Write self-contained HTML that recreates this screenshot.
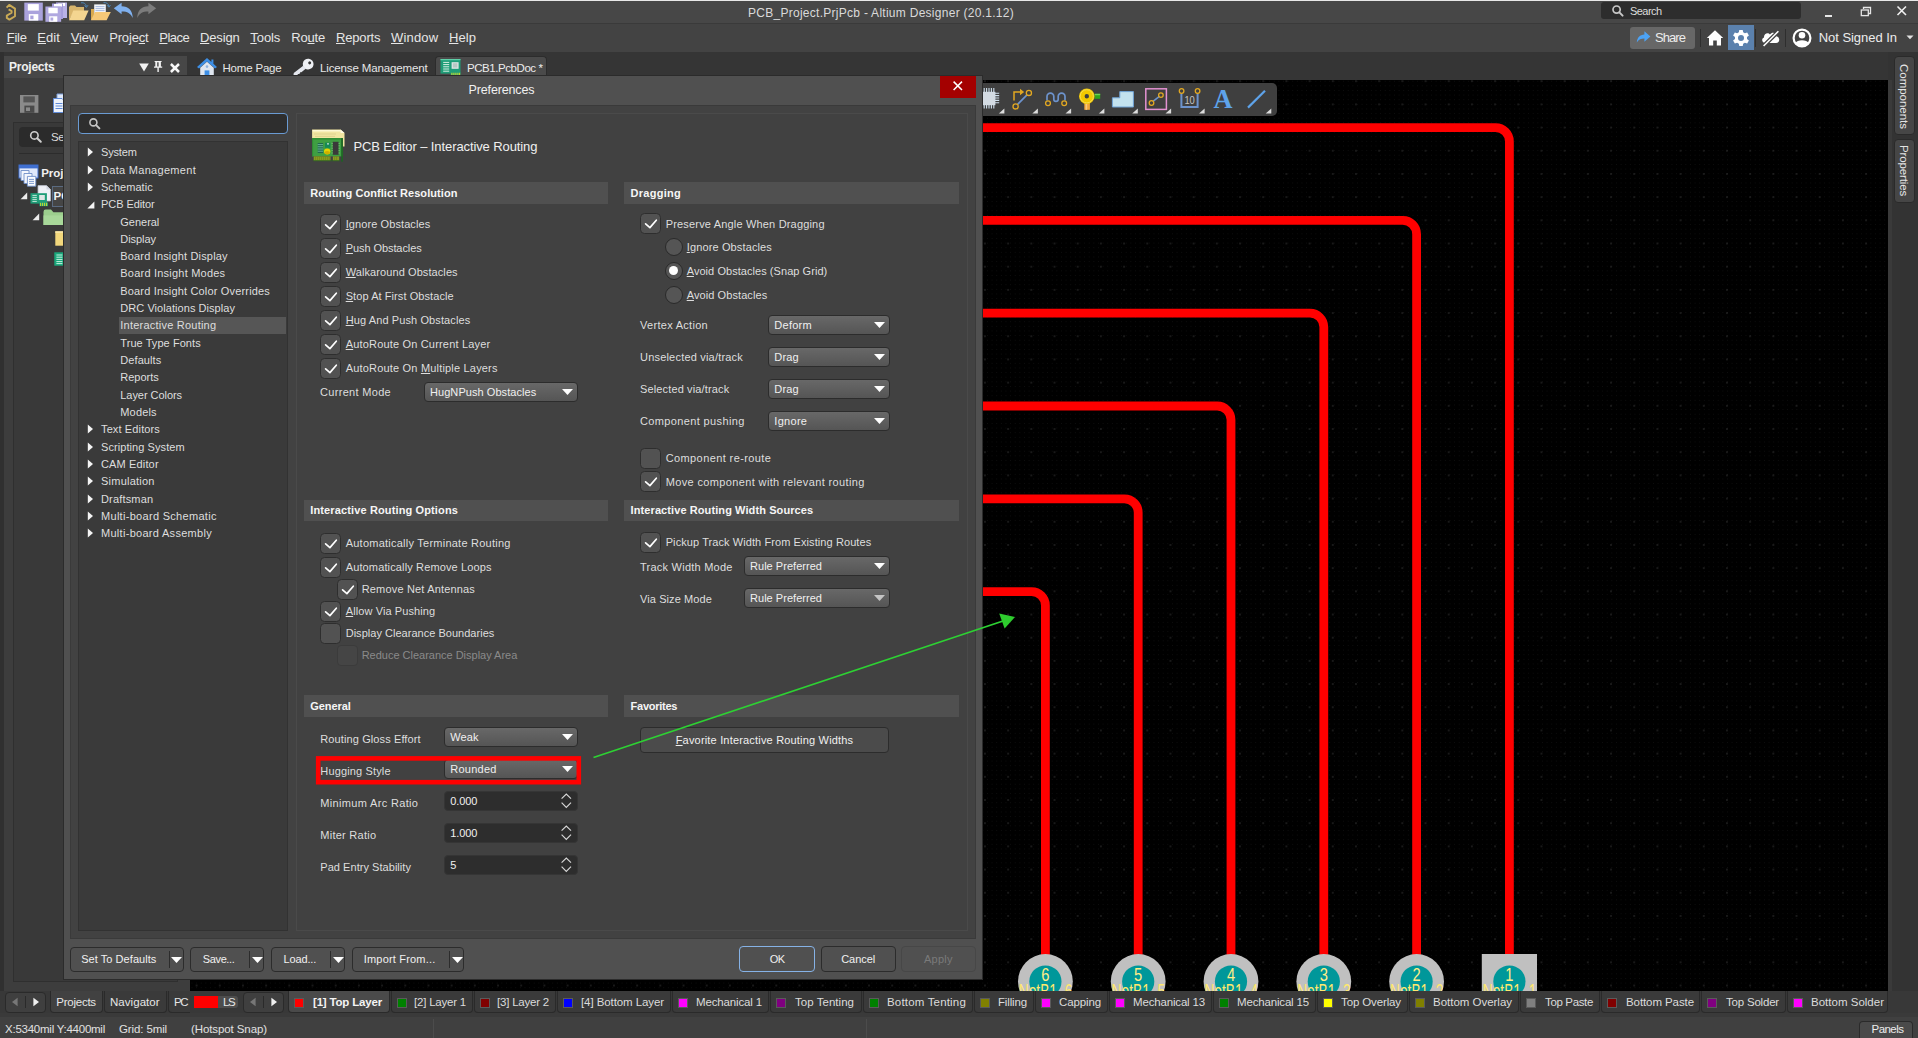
<!DOCTYPE html>
<html lang="en"><head><meta charset="utf-8"><title>Altium Designer - Preferences</title>
<style>
html,body{margin:0;padding:0}
body{width:1918px;height:1038px;overflow:hidden;background:#353535;position:relative;font-family:"Liberation Sans",sans-serif;font-size:11px;color:#dedede}
.a{position:absolute;display:block}
.t{white-space:nowrap;overflow:visible}
u{text-decoration:underline;text-underline-offset:1px;text-decoration-thickness:1px}
svg{overflow:visible}
</style></head>
<body>
<div class="a" style="left:0px;top:0px;width:1918px;height:1px;background:#e8e8e8;"></div>
<div class="a" style="left:0px;top:1px;width:1918px;height:22px;background:#474747;"></div>
<div class="a" style="left:0px;top:23px;width:1918px;height:1px;background:#3a3a3a;"></div>
<svg class="a" style="left:5px;top:3px;" width="12" height="18" viewBox="0 0 12 18"><path d="M1.6 4.6 L4.2 1.9 L10 5.6 L10 13.2 L4.4 16.6 L1.8 14.9 L1.8 12.6 L6.6 9.7 L6.6 8.1 L3.6 6.4" fill="none" stroke="#c9aa56" stroke-width="1.9" stroke-linejoin="round"/></svg>
<svg class="a" style="left:24px;top:2px;" width="20" height="20" viewBox="0 0 20 20"><g transform="translate(0.3,0.6) scale(1.0)"><rect x="0" y="0" width="18.5" height="18" fill="#aaa2dc"/><rect x="3.5" y="1.5" width="11" height="6.5" fill="#fff"/><rect x="4.5" y="11.5" width="9.5" height="6.5" fill="#fff"/><rect x="6" y="13" width="3.2" height="3.6" fill="#aaa2dc"/></g></svg>
<svg class="a" style="left:45px;top:2px;" width="23" height="20" viewBox="0 0 23 20"><rect x="11" y="0.5" width="11" height="15.5" fill="#b9b2e6"/><rect x="13" y="1" width="7" height="3" fill="#fff"/><rect x="7" y="1.5" width="11" height="15.5" fill="#a59ddb"/><rect x="9" y="2" width="8" height="2.6" fill="#fff"/><g transform="translate(0.4,4.5) scale(0.85)"><rect x="0" y="0" width="18.5" height="18" fill="#b0a8e0"/><rect x="3.5" y="1.5" width="11" height="6.5" fill="#fff"/><rect x="4.5" y="11.5" width="9.5" height="6.5" fill="#fff"/><rect x="6" y="13" width="3.2" height="3.6" fill="#b0a8e0"/></g></svg>
<svg class="a" style="left:68px;top:2px;" width="22" height="20" viewBox="0 0 22 20"><path d="M1 18 L1 5 L2.5 3.5 L7 3.5 L8.5 5 L16 5 L16 9 L6 9 Z" fill="#d9b56c"/><path d="M1 18.3 L5.3 8.6 L20.6 8.6 L16.2 18.3 Z" fill="#f4d590"/><path d="M13 0.8 q4.5 -0.6 5.4 3.6 m-1.8 -1 l1.8 2 l1.6 -2.2" fill="none" stroke="#4e86b8" stroke-width="1"/></svg>
<svg class="a" style="left:90px;top:2px;" width="22" height="20" viewBox="0 0 22 20"><path d="M1 18 L1 7 L4 7 L4 18 Z" fill="#d9a84e"/><rect x="4.2" y="2.4" width="11.6" height="11" fill="#f4f6fb"/><path d="M5.5 4.6h9M5.5 6.6h9M5.5 8.6h9" stroke="#9fb3dc" stroke-width="0.9"/><path d="M1 18.3 L5 10 L20.8 10 L16.6 18.3 Z" fill="#f6c878"/><path d="M13.5 0.6 q4.5 -0.4 5.4 3.6 m-1.8 -1 l1.8 2 l1.6 -2.2" fill="none" stroke="#4e86b8" stroke-width="1"/></svg>
<svg class="a" style="left:113px;top:2px;" width="22" height="18" viewBox="0 0 22 18"><path d="M0.8 6.2 L8.6 0.8 L8.6 4.2 C15.5 4.2 19.6 8.5 19.8 16 C17.6 11.2 14.2 9.3 8.6 9.4 L8.6 12.2 Z" fill="#7fb0ee"/></svg>
<svg class="a" style="left:135px;top:2px;" width="22" height="18" viewBox="0 0 22 18"><path d="M21.2 6.2 L13.4 0.8 L13.4 4.2 C6.5 4.2 2.4 8.5 2.2 16 C4.4 11.2 7.8 9.3 13.4 9.4 L13.4 12.2 Z" fill="#7c7c7c"/></svg>
<div class="a t" style="top:4.7px;line-height:16px;font-size:12px;color:#dadada;letter-spacing:0.273px;left:581px;width:600px;text-align:center;"><span id="t0">PCB_Project.PrjPcb - Altium Designer (20.1.12)</span></div>
<div class="a" style="left:1601px;top:2px;width:200px;height:17px;background:#2d2d2d;border-radius:3px;"></div>
<svg class="a" style="left:1611px;top:4px;" width="14" height="14" viewBox="0 0 14 14"><circle cx="5.6" cy="5.6" r="3.6" fill="none" stroke="#c8c8c8" stroke-width="1.7"/><path d="M8.4 8.4 L11.6 11.6" stroke="#c8c8c8" stroke-width="2" stroke-linecap="round"/></svg>
<div class="a t" style="top:2.5px;line-height:16px;font-size:11px;color:#dcdcdc;letter-spacing:-0.560px;left:1630px;"><span id="t1">Search</span></div>
<div class="a" style="left:1825px;top:15px;width:7px;height:1.6px;background:#e6e6e6;"></div>
<svg class="a" style="left:1860px;top:6px;" width="12" height="12" viewBox="0 0 12 12"><path d="M3.5 3 V1.5 H10.5 V7.5 H8.6" fill="none" stroke="#e6e6e6" stroke-width="1.3"/><rect x="1.3" y="4" width="7" height="5.6" fill="none" stroke="#e6e6e6" stroke-width="1.3"/></svg>
<svg class="a" style="left:1896px;top:5px;" width="12" height="12" viewBox="0 0 12 12"><path d="M1.5 1.5 L10 10 M10 1.5 L1.5 10" stroke="#f0f0f0" stroke-width="1.6"/></svg>
<div class="a" style="left:0px;top:24px;width:1918px;height:28px;background:#434343;"></div>
<div class="a t" style="top:28.6px;line-height:18px;font-size:13px;color:#e6e6e6;letter-spacing:-0.217px;left:6.7px;"><span id="t2"><u>F</u>ile</span></div>
<div class="a t" style="top:28.6px;line-height:18px;font-size:13px;color:#e6e6e6;letter-spacing:0.023px;left:37.3px;"><span id="t3"><u>E</u>dit</span></div>
<div class="a t" style="top:28.6px;line-height:18px;font-size:13px;color:#e6e6e6;letter-spacing:-0.163px;left:70.7px;"><span id="t4"><u>V</u>iew</span></div>
<div class="a t" style="top:28.6px;line-height:18px;font-size:13px;color:#e6e6e6;letter-spacing:-0.169px;left:109.2px;"><span id="t5">Proje<u>c</u>t</span></div>
<div class="a t" style="top:28.6px;line-height:18px;font-size:13px;color:#e6e6e6;letter-spacing:-0.506px;left:159.3px;"><span id="t6"><u>P</u>lace</span></div>
<div class="a t" style="top:28.6px;line-height:18px;font-size:13px;color:#e6e6e6;letter-spacing:-0.128px;left:200px;"><span id="t7"><u>D</u>esign</span></div>
<div class="a t" style="top:28.6px;line-height:18px;font-size:13px;color:#e6e6e6;letter-spacing:-0.072px;left:250.3px;"><span id="t8"><u>T</u>ools</span></div>
<div class="a t" style="top:28.6px;line-height:18px;font-size:13px;color:#e6e6e6;letter-spacing:-0.201px;left:291.3px;"><span id="t9">Ro<u>u</u>te</span></div>
<div class="a t" style="top:28.6px;line-height:18px;font-size:13px;color:#e6e6e6;letter-spacing:-0.176px;left:336px;"><span id="t10"><u>R</u>eports</span></div>
<div class="a t" style="top:28.6px;line-height:18px;font-size:13px;color:#e6e6e6;letter-spacing:0.175px;left:391px;"><span id="t11"><u>W</u>indow</span></div>
<div class="a t" style="top:28.6px;line-height:18px;font-size:13px;color:#e6e6e6;letter-spacing:0.062px;left:449px;"><span id="t12"><u>H</u>elp</span></div>
<div class="a" style="left:1630px;top:27px;width:65px;height:22px;background:#676767;border-radius:3px;"></div>
<svg class="a" style="left:1636px;top:30px;" width="16" height="16" viewBox="0 0 16 16"><path d="M14.4 6.4 L8.4 1.2 L8.4 4.4 C3.8 4.6 1.2 7.4 0.8 12.4 C2.8 9.6 5 8.6 8.4 8.6 L8.4 11.8 Z" fill="#4da3f5"/></svg>
<div class="a t" style="top:28.8px;line-height:18px;font-size:13px;color:#ececec;letter-spacing:-0.941px;left:1655px;"><span id="t13">Share</span></div>
<div class="a" style="left:1700px;top:29px;width:1px;height:18px;background:#2e2e2e;"></div>
<div class="a" style="left:1755px;top:29px;width:1px;height:18px;background:#2e2e2e;"></div>
<div class="a" style="left:1785px;top:29px;width:1px;height:18px;background:#2e2e2e;"></div>
<svg class="a" style="left:1706px;top:29px;" width="18" height="18" viewBox="0 0 18 18"><path d="M9 1.2 L0.8 9 H3 V16.6 H7.2 V11.4 H10.8 V16.6 H15 V9 H17.2 Z" fill="#fff"/></svg>
<div class="a" style="left:1728px;top:25px;width:26px;height:25px;background:#5b81ad;"></div>
<svg class="a" style="left:1732px;top:28.5px;" width="18" height="18" viewBox="0 0 18 18"><g transform="translate(9,9)"><path fill="#fff" fill-rule="evenodd" d="M-1.73 -8.12 L1.73 -8.12 L2.15 -5.71 L3.87 -4.72 L6.16 -5.56 L7.90 -2.56 L6.02 -0.99 L6.02 0.99 L7.90 2.56 L6.16 5.56 L3.87 4.72 L2.15 5.71 L1.73 8.12 L-1.73 8.12 L-2.15 5.71 L-3.87 4.72 L-6.16 5.56 L-7.90 2.56 L-6.02 0.99 L-6.02 -0.99 L-7.90 -2.56 L-6.16 -5.56 L-3.87 -4.72 L-2.15 -5.71 Z M3 0 A3 3 0 1 0 -3 0 A3 3 0 1 0 3 0 Z"/></g></svg>
<svg class="a" style="left:1761px;top:29px;" width="20" height="18" viewBox="0 0 20 18"><path d="M4.4 14 C0.8 14 0 9.6 3 8.4 C2.6 4.6 7 2.8 9 5.4 C11 2.6 15.6 3.6 15.6 7.4 C19 7.6 19.4 14 15 14 Z" fill="#fff"/><path d="M2.6 17 L17.4 2.3" stroke="#434343" stroke-width="4"/><path d="M2.6 17 L17.4 2.3" stroke="#fff" stroke-width="1.6"/></svg>
<svg class="a" style="left:1792.3px;top:27.5px;" width="20" height="20" viewBox="0 0 20 20"><circle cx="10" cy="10" r="8.4" fill="none" stroke="#fff" stroke-width="2.2"/><circle cx="10" cy="7.3" r="3.3" fill="#fff"/><path d="M3.4 15.2 C4.6 11.2 15.4 11.2 16.6 15.2 C14 19 6 19 3.4 15.2 Z" fill="#fff"/></svg>
<div class="a t" style="top:28.6px;line-height:18px;font-size:13px;color:#ececec;letter-spacing:-0.037px;left:1818.7px;"><span id="t14">Not Signed In</span></div>
<svg class="a" style="left:1906px;top:35px;" width="8" height="5" viewBox="0 0 8 5"><path d="M0.5 0.5 H7.5 L4 4.2 Z" fill="#e0e0e0"/></svg>
<div class="a" style="left:0px;top:52px;width:1918px;height:29px;background:#353535;"></div>
<div class="a" style="left:4px;top:56px;width:183px;height:22px;background:#474747;"></div>
<div class="a t" style="top:59.0px;line-height:16px;font-size:12px;font-weight:700;color:#f0f0f0;letter-spacing:-0.232px;left:9px;"><span id="t15">Projects</span></div>
<svg class="a" style="left:138.6px;top:62.6px;" width="10" height="9" viewBox="0 0 10 9"><path d="M0.2 0.4 H9.8 L5 8.6 Z" fill="#f2f2f2"/></svg>
<svg class="a" style="left:153.4px;top:60px;" width="10" height="13" viewBox="0 0 10 13"><path d="M1.6 0.9 H8.6 V2.1 H7.9 V6.4 H9.2 V7.8 H5.8 V12 H4.4 V7.8 H1 V6.4 H2.3 V2.1 H1.6 Z M4.2 2.2 H5.6 V6.4 H4.2 Z" fill="#f2f2f2" fill-rule="evenodd"/></svg>
<svg class="a" style="left:169.4px;top:61.5px;" width="12" height="12" viewBox="0 0 12 12"><path d="M1.9 2 L10 10 M10 2 L1.9 10" stroke="#f8f8f8" stroke-width="2.5"/></svg>
<svg class="a" style="left:196px;top:57px;" width="22" height="20" viewBox="0 0 22 20"><path d="M11 1 L1 10 L3 11.4 L11 4.4 L19 11.4 L21 10 L17.4 6.8 V2.6 H15.4 V5 Z" fill="#3d8fe6"/><path d="M4.2 10.8 L11 4.8 L17.8 10.8 V19.4 H4.2 Z" fill="#dfe6f0"/><rect x="8.6" y="13.4" width="4.8" height="6" fill="#3d8fe6"/><circle cx="11" cy="9.6" r="1.3" fill="#8fb4e0"/></svg>
<div class="a t" style="top:59.6px;line-height:16px;font-size:11.5px;color:#e6e6e6;letter-spacing:-0.193px;left:222.5px;"><span id="t16">Home Page</span></div>
<svg class="a" style="left:293px;top:58px;" width="22" height="20" viewBox="0 0 22 20"><g transform="rotate(-38 14 7)"><circle cx="15.5" cy="7" r="5.4" fill="#eef0f4"/><circle cx="17.4" cy="7" r="1.5" fill="#353535"/><path d="M10.6 5.2 H-1.4 L-3.2 7 L-1.4 9.2 H0.4 L1.2 8.4 L2 9.2 H3.6 L4.4 8.4 L5.2 9.2 H10.6 Z" fill="#e4e7ee"/></g></svg>
<div class="a t" style="top:59.6px;line-height:16px;font-size:11.5px;color:#e6e6e6;letter-spacing:-0.137px;left:320px;"><span id="t17">License Management</span></div>
<div class="a" style="left:435px;top:56px;width:112px;height:25px;background:#4a4a4a;border:1px solid #2c2c2c;border-radius:4px;border-bottom:none;box-sizing:border-box;border-bottom-left-radius:0;border-bottom-right-radius:0;"></div>
<svg class="a" style="left:440px;top:58px;" width="22" height="20" viewBox="0 0 22 20"><rect x="0.5" y="1" width="20" height="14.6" fill="#1f9d78"/><rect x="0.5" y="1" width="20" height="1.2" fill="#5fd0a8"/><path d="M3.2 4.4h6M3.2 6.6h6M3.2 8.8h6M3.2 11h6M3.2 13.2h6" stroke="#d8f0e4" stroke-width="1"/><rect x="11.6" y="4.2" width="7" height="6.6" fill="#dfe6e6"/><rect x="12.8" y="5.2" width="4.6" height="4.4" fill="#b8c8c4"/><rect x="10.6" y="14.2" width="9.8" height="4.4" fill="#1f9d78"/><path d="M11.9 14.8v3.6M13.9 14.8v3.6M15.9 14.8v3.6M17.9 14.8v3.6M19.6 14.8v3.6" stroke="#c8d830" stroke-width="1.1"/></svg>
<div class="a t" style="top:59.6px;line-height:16px;font-size:11.5px;color:#ececec;letter-spacing:-0.438px;left:467px;"><span id="t18">PCB1.PcbDoc *</span></div>
<div class="a" style="left:1888px;top:52px;width:30px;height:960px;background:#333333;"></div>
<div class="a" style="left:1888px;top:80px;width:4px;height:911px;background:#3a3a3a;"></div>
<div class="a" style="left:1894.2px;top:56.2px;width:20.4px;height:79.3px;background:#464646;border:1px solid #2a2a2a;border-radius:4px;box-sizing:border-box;"></div>
<div class="a" style="left:1894.2px;top:138.6px;width:20.4px;height:64.7px;background:#464646;border:1px solid #2a2a2a;border-radius:4px;box-sizing:border-box;"></div>
<div class="a t" style="left:1904.3px;top:63.7px;font-size:11.5px;color:#e4e4e4;transform-origin:0 0;transform:rotate(90deg) translateY(-50%);line-height:14px;letter-spacing:-0.022px;"><span id="t19">Components</span></div>
<div class="a t" style="left:1904.3px;top:145.2px;font-size:11.5px;color:#e4e4e4;transform-origin:0 0;transform:rotate(90deg) translateY(-50%);line-height:14px;letter-spacing:-0.142px;"><span id="t20">Properties</span></div>
<div class="a" style="left:0px;top:52px;width:4px;height:986px;background:#303030;"></div>
<div class="a" style="left:4px;top:78px;width:186px;height:913px;background:#3d3d3d;"></div>
<svg class="a" style="left:19.5px;top:94.5px;" width="19" height="18" viewBox="0 0 19 18"><rect x="0" y="0" width="18.4" height="17.8" fill="#8a8a8a"/><rect x="3.4" y="1.4" width="11.4" height="6" fill="#555"/><rect x="4.4" y="10.6" width="10" height="7.2" fill="#4a4a4a"/><rect x="6" y="12.4" width="4" height="3.6" fill="#8a8a8a"/></svg>
<svg class="a" style="left:52px;top:92px;" width="14" height="22" viewBox="0 0 14 22"><path d="M5 2 H12 V14 H5 Z" fill="#dfe8f8" stroke="#7f9fd8" stroke-width="1"/><path d="M1.5 6.5 H10 L12.5 9 V20.5 H1.5 Z" fill="#eef3fc" stroke="#5e8ad8" stroke-width="1"/><path d="M3.5 11.5h7M3.5 14h7M3.5 16.5h7" stroke="#5e8ad8" stroke-width="1.2"/></svg>
<div class="a" style="left:12.5px;top:122px;width:165.5px;height:860px;background:#393939;border:1px solid #2f2f2f;box-sizing:border-box;"></div>
<div class="a" style="left:19px;top:126.5px;width:160px;height:20.5px;background:#2b2b2b;border-radius:4px;"></div>
<svg class="a" style="left:29px;top:130px;" width="14" height="14" viewBox="0 0 14 14"><circle cx="5.4" cy="5.4" r="3.7" fill="none" stroke="#cfcfcf" stroke-width="1.6"/><path d="M8.2 8.2 L11.8 11.8" stroke="#cfcfcf" stroke-width="2" stroke-linecap="round"/></svg>
<div class="a t" style="top:129.0px;line-height:16px;font-size:11.5px;color:#dcdcdc;letter-spacing:-0.406px;left:51px;"><span id="t21">Search</span></div>
<div class="a" style="left:19px;top:153px;width:165px;height:1px;background:#2c2c2c;"></div>
<svg class="a" style="left:18px;top:163.5px;" width="22" height="23" viewBox="0 0 22 23"><rect x="1" y="1" width="19" height="13" fill="#dfe8fa" stroke="#3f6fd0" stroke-width="1"/><rect x="1" y="1" width="19" height="3.4" fill="#3f6fd0"/><path d="M3 6.5h8v10H3z" fill="#f4f7fd" stroke="#6f8fc8" stroke-width="0.9"/><path d="M6 9.5h8v10H6z" fill="#f4f7fd" stroke="#6f8fc8" stroke-width="0.9"/><path d="M9.4 12.4h8.4v9.8H9.4z" fill="#fafcff" stroke="#6f8fc8" stroke-width="0.9"/><path d="M11 15.4h5M11 17.4h5M11 19.4h5" stroke="#6f8fc8" stroke-width="0.9"/></svg>
<div class="a t" style="top:165.4px;line-height:16px;font-size:11.5px;font-weight:700;color:#f0f0f0;left:41.2px;"><span id="t22">Project Group</span></div>
<svg class="a" style="left:19.8px;top:191.5px;" width="8" height="8" viewBox="0 0 8 8"><path d="M7.2 0.6 V7.2 H0.6 Z" fill="#ececec"/></svg>
<svg class="a" style="left:30px;top:185px;" width="22" height="22" viewBox="0 0 22 22"><path d="M8 0.6 H16.5 L20.5 4.6 V16 H8 Z" fill="#eef0f6" stroke="#b8bcc8" stroke-width="0.8"/><path d="M16.5 0.6 V4.6 H20.5" fill="#cfd4e0"/><rect x="0.5" y="8.2" width="16.4" height="10.4" fill="#1f9d78"/><path d="M2.4 10.4h4.4M2.4 12.4h4.4M2.4 14.4h4.4M2.4 16.4h4.4" stroke="#d8f0e4" stroke-width="0.9"/><rect x="9.2" y="10" width="5.6" height="5" fill="#dfe6e6"/><rect x="9.4" y="17.4" width="8.6" height="3.8" fill="#1f9d78"/><path d="M10.6 17.8v3.2M12.6 17.8v3.2M14.6 17.8v3.2M16.6 17.8v3.2" stroke="#c8d830" stroke-width="1"/></svg>
<div class="a" style="left:51.5px;top:186px;width:140px;height:20.5px;background:#454545;border:1px solid #5a6a80;box-sizing:border-box;"></div>
<div class="a t" style="top:188.2px;line-height:16px;font-size:11.5px;font-weight:700;color:#f4f4f4;left:53.5px;"><span id="t23">PCB_Project.PrjPcb</span></div>
<svg class="a" style="left:32.2px;top:213px;" width="8" height="8" viewBox="0 0 8 8"><path d="M7.2 0.6 V7.2 H0.6 Z" fill="#ececec"/></svg>
<svg class="a" style="left:43px;top:209px;" width="24" height="17" viewBox="0 0 24 17"><path d="M0.5 16 V3 Q0.5 0.6 2.6 0.6 H8 L10.4 3.2 H21 Q23 3.2 23 5 V16 Z" fill="#9ccf8e"/><path d="M0.5 16 V6.4 H23 V16 Z" fill="#a8d89a"/></svg>
<svg class="a" style="left:54.5px;top:230.8px;" width="14" height="15" viewBox="0 0 14 15"><rect x="0.3" y="0.3" width="13" height="14.4" fill="#f2d77c"/><rect x="0.3" y="0.3" width="13" height="1.6" fill="#f8e6a8"/></svg>
<svg class="a" style="left:54px;top:252.4px;" width="14" height="14" viewBox="0 0 14 14"><rect x="0.3" y="0.3" width="13.4" height="13.4" fill="#1aa87c"/><path d="M2.4 3h6M2.4 5.2h6M2.4 7.4h6M2.4 9.6h6M2.4 11.6h6" stroke="#c8f0de" stroke-width="1"/></svg>
<div class="a" style="left:190px;top:78px;width:1698px;height:2px;background:#353535;"></div>
<div class="a" style="left:190px;top:80px;width:1698px;height:911px;background-color:#000;background-image:radial-gradient(circle,#343434 0.5px,transparent 0.85px),radial-gradient(circle,#0f0f0f 0.45px,transparent 0.7px);background-size:23.2px 23.2px,4.64px 4.64px;background-position:-5.0px -10.4px,-0.36px -1.12px;"></div>
<svg class="a" style="left:188px;top:81px;font-family:'Liberation Sans',sans-serif" width="1700" height="910.5" viewBox="188 81 1700 910.5"><path d="M900 127.6 H1495.6000000000001 A13.8 13.8 0 0 1 1509.4 141.4 V960 M900 220.4 H1402.8 A13.8 13.8 0 0 1 1416.6 234.20000000000002 V960 M900 313.2 H1310.0 A13.8 13.8 0 0 1 1323.8 327.0 V960 M900 406.0 H1217.2 A13.8 13.8 0 0 1 1231.0 419.8 V960 M900 498.8 H1124.4 A13.8 13.8 0 0 1 1138.2 512.6 V960 M900 591.6 H1031.6000000000001 A13.8 13.8 0 0 1 1045.4 605.4 V960 " fill="none" stroke="#ff0000" stroke-width="8.8"/><rect x="1481.8000000000002" y="954" width="55.2" height="60" fill="#c0c0c0"/><circle cx="1509.4" cy="981.5" r="16.1" fill="#00979a"/><text x="1509.4" y="980.8" font-size="19" fill="#ffee88" text-anchor="middle" textLength="8.2" lengthAdjust="spacingAndGlyphs">1</text><text x="1482.8000000000002" y="997.8" font-size="21" fill="#ffe86e" textLength="53.5" lengthAdjust="spacingAndGlyphs">NetB1_1</text><circle cx="1416.6" cy="981.5" r="27.4" fill="#c0c0c0"/><circle cx="1416.6" cy="981.5" r="16.1" fill="#00979a"/><text x="1416.6" y="980.8" font-size="19" fill="#ffee88" text-anchor="middle" textLength="8.2" lengthAdjust="spacingAndGlyphs">2</text><text x="1390.0" y="997.8" font-size="21" fill="#ffe86e" textLength="53.5" lengthAdjust="spacingAndGlyphs">NetB1_2</text><circle cx="1323.8" cy="981.5" r="27.4" fill="#c0c0c0"/><circle cx="1323.8" cy="981.5" r="16.1" fill="#00979a"/><text x="1323.8" y="980.8" font-size="19" fill="#ffee88" text-anchor="middle" textLength="8.2" lengthAdjust="spacingAndGlyphs">3</text><text x="1297.2" y="997.8" font-size="21" fill="#ffe86e" textLength="53.5" lengthAdjust="spacingAndGlyphs">NetB1_3</text><circle cx="1231.0" cy="981.5" r="27.4" fill="#c0c0c0"/><circle cx="1231.0" cy="981.5" r="16.1" fill="#00979a"/><text x="1231.0" y="980.8" font-size="19" fill="#ffee88" text-anchor="middle" textLength="8.2" lengthAdjust="spacingAndGlyphs">4</text><text x="1204.4" y="997.8" font-size="21" fill="#ffe86e" textLength="53.5" lengthAdjust="spacingAndGlyphs">NetB1_4</text><circle cx="1138.2" cy="981.5" r="27.4" fill="#c0c0c0"/><circle cx="1138.2" cy="981.5" r="16.1" fill="#00979a"/><text x="1138.2" y="980.8" font-size="19" fill="#ffee88" text-anchor="middle" textLength="8.2" lengthAdjust="spacingAndGlyphs">5</text><text x="1111.6000000000001" y="997.8" font-size="21" fill="#ffe86e" textLength="53.5" lengthAdjust="spacingAndGlyphs">NetB1_5</text><circle cx="1045.4" cy="981.5" r="27.4" fill="#c0c0c0"/><circle cx="1045.4" cy="981.5" r="16.1" fill="#00979a"/><text x="1045.4" y="980.8" font-size="19" fill="#ffee88" text-anchor="middle" textLength="8.2" lengthAdjust="spacingAndGlyphs">6</text><text x="1018.8000000000001" y="997.8" font-size="21" fill="#ffe86e" textLength="53.5" lengthAdjust="spacingAndGlyphs">NetB1_6</text></svg>
<div class="a" style="left:983px;top:82.5px;width:294px;height:33.5px;background:#3f3f3f;border-radius:0 5px 5px 0;"></div>
<svg class="a" style="left:983px;top:82px" width="296" height="35" viewBox="983 82 296 35"><rect x="983" y="91.8" width="12.4" height="13.4" fill="#d3dbe3"/><path d="M984.2 88v4M986.6 88v4M989 88v4M991.4 88v4M993.8 88v4M984.2 105v3.6M986.6 105v3.6M989 105v3.6M991.4 105v3.6M993.8 105v3.6" stroke="#cfe0ee" stroke-width="1.1"/><path d="M995 93.2h4.2M995 95.6h4.2M995 98h4.2M995 100.4h4.2M995 102.8h4.2" stroke="#cfe0ee" stroke-width="1.1"/><path d="M998.8 113.6 H1004.4 V108.4 Z" fill="#dcdcdc"/><path d="M1017.6 104.4 L1027 94.8" stroke="#6d93cc" stroke-width="1.7"/><circle cx="1015.6" cy="106.4" r="2.6" fill="none" stroke="#e2a822" stroke-width="1.3"/><circle cx="1028.9" cy="92.9" r="2.6" fill="none" stroke="#e2a822" stroke-width="1.3"/><path d="M1014 100.4 V92 H1020.4" fill="none" stroke="#e2a822" stroke-width="1.5"/><path d="M1020 88.8 L1024.2 92 L1020 95.2 Z" fill="#e2a822"/><path d="M1032.3 113.6 H1037.8999999999999 V108.4 Z" fill="#dcdcdc"/><path d="M1048 100.6 V96.6 a3.4 3.4 0 0 1 6.8 0 v2.6 a2.2 2.2 0 0 0 4.4 0 v-2.6 a3.4 3.4 0 0 1 6.8 0 V100.6" fill="none" stroke="#6d93cc" stroke-width="1.7" transform="translate(-1,0)"/><circle cx="1048" cy="103.2" r="2.4" fill="none" stroke="#e2a822" stroke-width="1.3"/><circle cx="1064.2" cy="103.2" r="2.4" fill="none" stroke="#e2a822" stroke-width="1.3"/><path d="M1065.5 113.6 H1071.1 V108.4 Z" fill="#dcdcdc"/><rect x="1094.6" y="93.8" width="5.6" height="5" fill="#2fa41c"/><rect x="1094.6" y="93.8" width="5.6" height="1.4" fill="#6fd058"/><rect x="1084.3" y="102.6" width="5.6" height="7.2" fill="#f2a63a"/><rect x="1085.6" y="102.6" width="1.6" height="7.2" fill="#f8c880"/><circle cx="1086.8" cy="96.3" r="5" fill="none" stroke="#f2c800" stroke-width="5.6"/><circle cx="1086.8" cy="96.3" r="6.6" fill="none" stroke="#f6dc50" stroke-width="1"/><path d="M1098.8 113.6 H1104.3999999999999 V108.4 Z" fill="#dcdcdc"/><path d="M1112.4 107 V97.8 H1119.8 V91.6 H1133.4 V107 Z" fill="#c3e2ee" stroke="#6fa3d6" stroke-width="1"/><path d="M1132.2 113.6 H1137.8 V108.4 Z" fill="#dcdcdc"/><rect x="1145.8" y="88.8" width="20.6" height="20.6" fill="none" stroke="#e392d2" stroke-width="1.5"/><path d="M1153 101.4 L1159.4 96.4" stroke="#6d93cc" stroke-width="1.6"/><circle cx="1151.5" cy="103" r="2.3" fill="none" stroke="#e2a822" stroke-width="1.3"/><circle cx="1160.9" cy="95.1" r="2.3" fill="none" stroke="#e2a822" stroke-width="1.3"/><path d="M1165.5 113.6 H1171.1 V108.4 Z" fill="#dcdcdc"/><path d="M1181.4 93.6 V107 H1197.6 V93.6" fill="none" stroke="#6d93cc" stroke-width="2"/><circle cx="1181.6" cy="91" r="2.3" fill="none" stroke="#e2a822" stroke-width="1.3"/><circle cx="1197.6" cy="91" r="2.3" fill="none" stroke="#e2a822" stroke-width="1.3"/><text x="1189.6" y="104.2" font-size="11.5" fill="#c4c4c4" text-anchor="middle" textLength="10.4" lengthAdjust="spacingAndGlyphs" font-family="'Liberation Sans',sans-serif">10</text><path d="M1199 113.6 H1204.6 V108.4 Z" fill="#dcdcdc"/><text x="1213.4" y="108.3" font-size="28" font-weight="700" fill="#5ea3ea" textLength="19" lengthAdjust="spacingAndGlyphs" font-family="'Liberation Serif',serif">A</text><path d="M1248 107.6 L1265 90.8" stroke="#5ea3ea" stroke-width="2.2"/><path d="M1265.7 113.6 H1271.3 V108.4 Z" fill="#dcdcdc"/></svg>
<div class="a" style="left:0px;top:991px;width:1918px;height:22px;background:#383838;"></div>
<div class="a" style="left:0px;top:1012.5px;width:1918px;height:4px;background:#3a3a3a;"></div>
<div class="a" style="left:0px;top:1016.5px;width:1918px;height:21.5px;background:#404040;"></div>
<div class="a" style="left:433px;top:1019px;width:1px;height:19px;background:#4c4c4c;"></div>
<div class="a" style="left:866px;top:1019px;width:1px;height:19px;background:#4c4c4c;"></div>
<div class="a" style="left:4.5px;top:991.5px;width:41.5px;height:21px;background:#3f3f3f;border:1px solid #2a2a2a;border-radius:4px;box-sizing:border-box;"></div>
<div class="a" style="left:25px;top:996px;width:1px;height:12px;background:#2a2a2a;"></div>
<svg class="a" style="left:11px;top:997px;" width="8" height="10" viewBox="0 0 8 10"><path d="M6.6 0.8 V9.2 L1 5 Z" fill="#777"/></svg>
<svg class="a" style="left:32px;top:997px;" width="8" height="10" viewBox="0 0 8 10"><path d="M1.4 0.8 V9.2 L7 5 Z" fill="#f0f0f0"/></svg>
<div class="a" style="left:49.5px;top:991px;width:53.5px;height:21.5px;background:#414141;border:1px solid #2a2a2a;box-sizing:border-box;border-top:none;border-radius:0 0 4px 4px;"></div>
<div class="a" style="left:103.5px;top:991px;width:63px;height:21.5px;background:#3a3a3a;border:1px solid #2a2a2a;box-sizing:border-box;border-top:none;border-radius:0 0 4px 4px;"></div>
<div class="a" style="left:167.5px;top:991px;width:22px;height:21.5px;background:#3a3a3a;border:1px solid #2a2a2a;box-sizing:border-box;border-top:none;border-radius:0 0 4px 4px;border-right:none;border-radius:0 0 0 4px;"></div>
<div class="a t" style="top:994.0px;line-height:16px;font-size:11.5px;color:#e6e6e6;letter-spacing:-0.231px;left:56.2px;"><span id="t24">Projects</span></div>
<div class="a t" style="top:994.0px;line-height:16px;font-size:11.5px;color:#e6e6e6;letter-spacing:0.053px;left:110px;"><span id="t25">Navigator</span></div>
<div class="a t" style="top:994.0px;line-height:16px;font-size:11.5px;color:#e6e6e6;letter-spacing:-1.492px;left:174px;"><span id="t26">PC</span></div>
<div class="a" style="left:190px;top:991px;width:52px;height:22px;background:#383838;"></div>
<div class="a" style="left:218px;top:995.5px;width:20px;height:12.5px;background:#4d4d4d;border-radius:0 3px 3px 0;"></div>
<div class="a" style="left:193.8px;top:995.5px;width:24.4px;height:12.5px;background:#ff0000;"></div>
<div class="a t" style="top:994.2px;line-height:16px;font-size:11.5px;color:#e6e6e6;letter-spacing:-1.289px;left:223px;"><span id="t27">LS</span></div>
<div class="a" style="left:242.5px;top:991.5px;width:41.5px;height:21px;background:#3f3f3f;border:1px solid #2a2a2a;border-radius:4px;box-sizing:border-box;"></div>
<div class="a" style="left:263px;top:996px;width:1px;height:12px;background:#2a2a2a;"></div>
<svg class="a" style="left:249px;top:997px;" width="8" height="10" viewBox="0 0 8 10"><path d="M6.6 0.8 V9.2 L1 5 Z" fill="#777"/></svg>
<svg class="a" style="left:270px;top:997px;" width="8" height="10" viewBox="0 0 8 10"><path d="M1.4 0.8 V9.2 L7 5 Z" fill="#f0f0f0"/></svg>
<div class="a" style="left:287.5px;top:991px;width:102.0px;height:21.5px;background:#4a4a4a;border:1px solid #2a2a2a;box-sizing:border-box;border-top:none;border-radius:0 0 4px 4px;"></div>
<div class="a" style="left:294px;top:997.5px;width:10px;height:10px;background:#ff0000;border:1px solid #5a5a5a;box-sizing:border-box;"></div>
<div class="a t" style="top:994.2px;line-height:16px;font-size:11.5px;font-weight:700;color:#f4f4f4;letter-spacing:-0.181px;left:313px;"><span id="t28">[1] Top Layer</span></div>
<div class="a" style="left:390.5px;top:991px;width:82.0px;height:21.5px;background:#3a3a3a;border:1px solid #2a2a2a;box-sizing:border-box;border-top:none;border-radius:0 0 4px 4px;"></div>
<div class="a" style="left:397px;top:997.5px;width:10px;height:10px;background:#008000;border:1px solid #5a5a5a;box-sizing:border-box;"></div>
<div class="a t" style="top:994.2px;line-height:16px;font-size:11.5px;color:#dcdcdc;letter-spacing:-0.213px;left:414px;"><span id="t29">[2] Layer 1</span></div>
<div class="a" style="left:473.5px;top:991px;width:82.0px;height:21.5px;background:#3a3a3a;border:1px solid #2a2a2a;box-sizing:border-box;border-top:none;border-radius:0 0 4px 4px;"></div>
<div class="a" style="left:480px;top:997.5px;width:10px;height:10px;background:#800000;border:1px solid #5a5a5a;box-sizing:border-box;"></div>
<div class="a t" style="top:994.2px;line-height:16px;font-size:11.5px;color:#dcdcdc;letter-spacing:-0.213px;left:497px;"><span id="t30">[3] Layer 2</span></div>
<div class="a" style="left:556.5px;top:991px;width:114.0px;height:21.5px;background:#3a3a3a;border:1px solid #2a2a2a;box-sizing:border-box;border-top:none;border-radius:0 0 4px 4px;"></div>
<div class="a" style="left:563px;top:997.5px;width:10px;height:10px;background:#0000ff;border:1px solid #5a5a5a;box-sizing:border-box;"></div>
<div class="a t" style="top:994.2px;line-height:16px;font-size:11.5px;color:#dcdcdc;letter-spacing:-0.086px;left:581px;"><span id="t31">[4] Bottom Layer</span></div>
<div class="a" style="left:671.5px;top:991px;width:97.0px;height:21.5px;background:#3a3a3a;border:1px solid #2a2a2a;box-sizing:border-box;border-top:none;border-radius:0 0 4px 4px;"></div>
<div class="a" style="left:678px;top:997.5px;width:10px;height:10px;background:#ff00ff;border:1px solid #5a5a5a;box-sizing:border-box;"></div>
<div class="a t" style="top:994.2px;line-height:16px;font-size:11.5px;color:#dcdcdc;letter-spacing:-0.147px;left:696px;"><span id="t32">Mechanical 1</span></div>
<div class="a" style="left:769.5px;top:991px;width:92.0px;height:21.5px;background:#3a3a3a;border:1px solid #2a2a2a;box-sizing:border-box;border-top:none;border-radius:0 0 4px 4px;"></div>
<div class="a" style="left:776px;top:997.5px;width:10px;height:10px;background:#800080;border:1px solid #5a5a5a;box-sizing:border-box;"></div>
<div class="a t" style="top:994.2px;line-height:16px;font-size:11.5px;color:#dcdcdc;letter-spacing:0.034px;left:795px;"><span id="t33">Top Tenting</span></div>
<div class="a" style="left:862.5px;top:991px;width:110.0px;height:21.5px;background:#3a3a3a;border:1px solid #2a2a2a;box-sizing:border-box;border-top:none;border-radius:0 0 4px 4px;"></div>
<div class="a" style="left:869px;top:997.5px;width:10px;height:10px;background:#008000;border:1px solid #5a5a5a;box-sizing:border-box;"></div>
<div class="a t" style="top:994.2px;line-height:16px;font-size:11.5px;color:#dcdcdc;letter-spacing:0.177px;left:887px;"><span id="t34">Bottom Tenting</span></div>
<div class="a" style="left:973.5px;top:991px;width:60.0px;height:21.5px;background:#3a3a3a;border:1px solid #2a2a2a;box-sizing:border-box;border-top:none;border-radius:0 0 4px 4px;"></div>
<div class="a" style="left:980px;top:997.5px;width:10px;height:10px;background:#808000;border:1px solid #5a5a5a;box-sizing:border-box;"></div>
<div class="a t" style="top:994.2px;line-height:16px;font-size:11.5px;color:#dcdcdc;letter-spacing:-0.150px;left:998px;"><span id="t35">Filling</span></div>
<div class="a" style="left:1034.5px;top:991px;width:73.0px;height:21.5px;background:#3a3a3a;border:1px solid #2a2a2a;box-sizing:border-box;border-top:none;border-radius:0 0 4px 4px;"></div>
<div class="a" style="left:1041px;top:997.5px;width:10px;height:10px;background:#ff00ff;border:1px solid #5a5a5a;box-sizing:border-box;"></div>
<div class="a t" style="top:994.2px;line-height:16px;font-size:11.5px;color:#dcdcdc;letter-spacing:-0.121px;left:1059px;"><span id="t36">Capping</span></div>
<div class="a" style="left:1108.5px;top:991px;width:103.0px;height:21.5px;background:#3a3a3a;border:1px solid #2a2a2a;box-sizing:border-box;border-top:none;border-radius:0 0 4px 4px;"></div>
<div class="a" style="left:1115px;top:997.5px;width:10px;height:10px;background:#ff00ff;border:1px solid #5a5a5a;box-sizing:border-box;"></div>
<div class="a t" style="top:994.2px;line-height:16px;font-size:11.5px;color:#dcdcdc;letter-spacing:-0.166px;left:1133px;"><span id="t37">Mechanical 13</span></div>
<div class="a" style="left:1212.5px;top:991px;width:103.0px;height:21.5px;background:#3a3a3a;border:1px solid #2a2a2a;box-sizing:border-box;border-top:none;border-radius:0 0 4px 4px;"></div>
<div class="a" style="left:1219px;top:997.5px;width:10px;height:10px;background:#008000;border:1px solid #5a5a5a;box-sizing:border-box;"></div>
<div class="a t" style="top:994.2px;line-height:16px;font-size:11.5px;color:#dcdcdc;letter-spacing:-0.166px;left:1237px;"><span id="t38">Mechanical 15</span></div>
<div class="a" style="left:1316.5px;top:991px;width:91.0px;height:21.5px;background:#3a3a3a;border:1px solid #2a2a2a;box-sizing:border-box;border-top:none;border-radius:0 0 4px 4px;"></div>
<div class="a" style="left:1323px;top:997.5px;width:10px;height:10px;background:#ffff00;border:1px solid #5a5a5a;box-sizing:border-box;"></div>
<div class="a t" style="top:994.2px;line-height:16px;font-size:11.5px;color:#dcdcdc;letter-spacing:-0.124px;left:1341px;"><span id="t39">Top Overlay</span></div>
<div class="a" style="left:1408.5px;top:991px;width:110.0px;height:21.5px;background:#3a3a3a;border:1px solid #2a2a2a;box-sizing:border-box;border-top:none;border-radius:0 0 4px 4px;"></div>
<div class="a" style="left:1415px;top:997.5px;width:10px;height:10px;background:#808000;border:1px solid #5a5a5a;box-sizing:border-box;"></div>
<div class="a t" style="top:994.2px;line-height:16px;font-size:11.5px;color:#dcdcdc;letter-spacing:-0.018px;left:1433px;"><span id="t40">Bottom Overlay</span></div>
<div class="a" style="left:1519.5px;top:991px;width:80.0px;height:21.5px;background:#3a3a3a;border:1px solid #2a2a2a;box-sizing:border-box;border-top:none;border-radius:0 0 4px 4px;"></div>
<div class="a" style="left:1526px;top:997.5px;width:10px;height:10px;background:#808080;border:1px solid #5a5a5a;box-sizing:border-box;"></div>
<div class="a t" style="top:994.2px;line-height:16px;font-size:11.5px;color:#dcdcdc;letter-spacing:-0.351px;left:1545px;"><span id="t41">Top Paste</span></div>
<div class="a" style="left:1600.5px;top:991px;width:99.0px;height:21.5px;background:#3a3a3a;border:1px solid #2a2a2a;box-sizing:border-box;border-top:none;border-radius:0 0 4px 4px;"></div>
<div class="a" style="left:1607px;top:997.5px;width:10px;height:10px;background:#800000;border:1px solid #5a5a5a;box-sizing:border-box;"></div>
<div class="a t" style="top:994.2px;line-height:16px;font-size:11.5px;color:#dcdcdc;letter-spacing:-0.087px;left:1626px;"><span id="t42">Bottom Paste</span></div>
<div class="a" style="left:1700.5px;top:991px;width:85.0px;height:21.5px;background:#3a3a3a;border:1px solid #2a2a2a;box-sizing:border-box;border-top:none;border-radius:0 0 4px 4px;"></div>
<div class="a" style="left:1707px;top:997.5px;width:10px;height:10px;background:#800080;border:1px solid #5a5a5a;box-sizing:border-box;"></div>
<div class="a t" style="top:994.2px;line-height:16px;font-size:11.5px;color:#dcdcdc;letter-spacing:-0.198px;left:1726px;"><span id="t43">Top Solder</span></div>
<div class="a" style="left:1786.5px;top:991px;width:101.5px;height:21.5px;background:#3a3a3a;border:1px solid #2a2a2a;box-sizing:border-box;border-top:none;border-radius:0 0 4px 4px;"></div>
<div class="a" style="left:1793px;top:997.5px;width:10px;height:10px;background:#ff00ff;border:1px solid #5a5a5a;box-sizing:border-box;"></div>
<div class="a t" style="top:994.2px;line-height:16px;font-size:11.5px;color:#dcdcdc;letter-spacing:0.010px;left:1811px;"><span id="t44">Bottom Solder</span></div>
<div class="a t" style="top:1021.0px;line-height:16px;font-size:11.5px;color:#e0e0e0;letter-spacing:-0.244px;left:5px;"><span id="t45">X:5340mil Y:4400mil</span></div>
<div class="a t" style="top:1021.0px;line-height:16px;font-size:11.5px;color:#e0e0e0;letter-spacing:-0.120px;left:119px;"><span id="t46">Grid: 5mil</span></div>
<div class="a t" style="top:1021.0px;line-height:16px;font-size:11.5px;color:#e0e0e0;letter-spacing:-0.097px;left:191px;"><span id="t47">(Hotspot Snap)</span></div>
<div class="a" style="left:1859px;top:1021px;width:53.5px;height:17px;background:#4a4a4a;border:1px solid #2a2a2a;border-radius:4px;box-sizing:border-box;border-bottom:none;border-radius:4px 4px 0 0;"></div>
<div class="a t" style="top:1021.4px;line-height:16px;font-size:11.5px;color:#ececec;letter-spacing:-0.529px;left:1587.5px;width:600px;text-align:center;"><span id="t48">Panels</span></div>
<div class="a" style="left:63px;top:75px;width:920px;height:904.5px;background:#505050;border:1px solid #2b2b2b;box-sizing:border-box;"></div>
<div class="a t" style="top:81.8px;line-height:16px;font-size:12.5px;color:#f0f0f0;letter-spacing:-0.146px;left:201.5px;width:600px;text-align:center;"><span id="t49">Preferences</span></div>
<div class="a" style="left:940px;top:76px;width:36px;height:21.5px;background:#a40000;"></div>
<svg class="a" style="left:951.5px;top:80px;" width="12" height="12" viewBox="0 0 12 12"><path d="M1.6 1.6 L10 10 M10 1.6 L1.6 10" stroke="#ffffff" stroke-width="1.5"/></svg>
<div class="a" style="left:70.4px;top:105px;width:905.6px;height:834px;background:#424242;border:1px solid #3a3a3a;box-sizing:border-box;"></div>
<div class="a" style="left:78px;top:113px;width:210px;height:21px;background:#2e2e2e;border:1px solid #6a9bd3;border-radius:4px;box-sizing:border-box;"></div>
<svg class="a" style="left:88px;top:117px;" width="14" height="14" viewBox="0 0 14 14"><circle cx="5.4" cy="5.4" r="3.5" fill="none" stroke="#c4c4c4" stroke-width="1.6"/><path d="M8.1 8.1 L11.4 11.4" stroke="#c4c4c4" stroke-width="2" stroke-linecap="round"/></svg>
<div class="a" style="left:78px;top:141px;width:210px;height:790px;background:#3a3a3a;border:1px solid #323232;box-sizing:border-box;"></div>
<div class="a" style="left:295.5px;top:113px;width:672px;height:818px;background:#414141;border:1px solid #4a4a4a;box-sizing:border-box;"></div>
<svg class="a" style="left:87px;top:147.2px;" width="7" height="10" viewBox="0 0 7 10"><path d="M0.8 0.4 L6 5 L0.8 9.6 Z" fill="#f4f4f4"/></svg>
<div class="a t" style="top:144.2px;line-height:16px;font-size:11px;letter-spacing:-0.165px;left:101px;"><span id="t50">System</span></div>
<svg class="a" style="left:87px;top:164.51999999999998px;" width="7" height="10" viewBox="0 0 7 10"><path d="M0.8 0.4 L6 5 L0.8 9.6 Z" fill="#f4f4f4"/></svg>
<div class="a t" style="top:161.5px;line-height:16px;font-size:11px;letter-spacing:0.300px;left:101px;"><span id="t51">Data Management</span></div>
<svg class="a" style="left:87px;top:181.83999999999997px;" width="7" height="10" viewBox="0 0 7 10"><path d="M0.8 0.4 L6 5 L0.8 9.6 Z" fill="#f4f4f4"/></svg>
<div class="a t" style="top:178.8px;line-height:16px;font-size:11px;letter-spacing:0.038px;left:101px;"><span id="t52">Schematic</span></div>
<svg class="a" style="left:86.5px;top:200.56px;" width="8" height="8" viewBox="0 0 8 8"><path d="M7.4 0.4 V7.4 H0.4 Z" fill="#f4f4f4"/></svg>
<div class="a t" style="top:196.2px;line-height:16px;font-size:11px;letter-spacing:-0.072px;left:101px;"><span id="t53">PCB Editor</span></div>
<div class="a t" style="top:213.5px;line-height:16px;font-size:11px;letter-spacing:-0.020px;left:120.3px;"><span id="t54">General</span></div>
<div class="a t" style="top:230.8px;line-height:16px;font-size:11px;letter-spacing:-0.054px;left:120.3px;"><span id="t55">Display</span></div>
<div class="a t" style="top:248.1px;line-height:16px;font-size:11px;letter-spacing:0.164px;left:120.3px;"><span id="t56">Board Insight Display</span></div>
<div class="a t" style="top:265.4px;line-height:16px;font-size:11px;letter-spacing:0.216px;left:120.3px;"><span id="t57">Board Insight Modes</span></div>
<div class="a t" style="top:282.8px;line-height:16px;font-size:11px;letter-spacing:0.165px;left:120.3px;"><span id="t58">Board Insight Color Overrides</span></div>
<div class="a t" style="top:300.1px;line-height:16px;font-size:11px;letter-spacing:0.054px;left:120.3px;"><span id="t59">DRC Violations Display</span></div>
<div class="a" style="left:119px;top:316.79999999999995px;width:167px;height:17px;background:#565656;"></div>
<div class="a t" style="top:317.4px;line-height:16px;font-size:11px;letter-spacing:0.225px;left:120.3px;"><span id="t60">Interactive Routing</span></div>
<div class="a t" style="top:334.7px;line-height:16px;font-size:11px;letter-spacing:0.061px;left:120.3px;"><span id="t61">True Type Fonts</span></div>
<div class="a t" style="top:352.0px;line-height:16px;font-size:11px;letter-spacing:0.080px;left:120.3px;"><span id="t62">Defaults</span></div>
<div class="a t" style="top:369.4px;line-height:16px;font-size:11px;letter-spacing:-0.019px;left:120.3px;"><span id="t63">Reports</span></div>
<div class="a t" style="top:386.7px;line-height:16px;font-size:11px;letter-spacing:-0.055px;left:120.3px;"><span id="t64">Layer Colors</span></div>
<div class="a t" style="top:404.0px;line-height:16px;font-size:11px;letter-spacing:0.155px;left:120.3px;"><span id="t65">Models</span></div>
<svg class="a" style="left:87px;top:424.32px;" width="7" height="10" viewBox="0 0 7 10"><path d="M0.8 0.4 L6 5 L0.8 9.6 Z" fill="#f4f4f4"/></svg>
<div class="a t" style="top:421.3px;line-height:16px;font-size:11px;letter-spacing:0.128px;left:101px;"><span id="t66">Text Editors</span></div>
<svg class="a" style="left:87px;top:441.64px;" width="7" height="10" viewBox="0 0 7 10"><path d="M0.8 0.4 L6 5 L0.8 9.6 Z" fill="#f4f4f4"/></svg>
<div class="a t" style="top:438.6px;line-height:16px;font-size:11px;letter-spacing:0.073px;left:101px;"><span id="t67">Scripting System</span></div>
<svg class="a" style="left:87px;top:458.96px;" width="7" height="10" viewBox="0 0 7 10"><path d="M0.8 0.4 L6 5 L0.8 9.6 Z" fill="#f4f4f4"/></svg>
<div class="a t" style="top:456.0px;line-height:16px;font-size:11px;letter-spacing:0.145px;left:101px;"><span id="t68">CAM Editor</span></div>
<svg class="a" style="left:87px;top:476.28px;" width="7" height="10" viewBox="0 0 7 10"><path d="M0.8 0.4 L6 5 L0.8 9.6 Z" fill="#f4f4f4"/></svg>
<div class="a t" style="top:473.3px;line-height:16px;font-size:11px;letter-spacing:0.234px;left:101px;"><span id="t69">Simulation</span></div>
<svg class="a" style="left:87px;top:493.59999999999997px;" width="7" height="10" viewBox="0 0 7 10"><path d="M0.8 0.4 L6 5 L0.8 9.6 Z" fill="#f4f4f4"/></svg>
<div class="a t" style="top:490.6px;line-height:16px;font-size:11px;letter-spacing:0.172px;left:101px;"><span id="t70">Draftsman</span></div>
<svg class="a" style="left:87px;top:510.9200000000001px;" width="7" height="10" viewBox="0 0 7 10"><path d="M0.8 0.4 L6 5 L0.8 9.6 Z" fill="#f4f4f4"/></svg>
<div class="a t" style="top:507.9px;line-height:16px;font-size:11px;letter-spacing:0.298px;left:101px;"><span id="t71">Multi-board Schematic</span></div>
<svg class="a" style="left:87px;top:528.24px;" width="7" height="10" viewBox="0 0 7 10"><path d="M0.8 0.4 L6 5 L0.8 9.6 Z" fill="#f4f4f4"/></svg>
<div class="a t" style="top:525.2px;line-height:16px;font-size:11px;letter-spacing:0.292px;left:101px;"><span id="t72">Multi-board Assembly</span></div>
<svg class="a" style="left:311px;top:129px" width="35" height="34" viewBox="311 129 35 34"><path d="M312.1 129.4 H340.6 L344.5 133 V146.5 H337.5 V138.6 H312.1 Z" fill="#f1e6a2"/><path d="M312.6 130 H340.2 L341.6 131.6 H312.6 Z" fill="#fdf8d4"/><path d="M340.6 129.4 L344.5 133 H340.6 Z" fill="#fffbe4"/><path d="M314 134h22M315 136.4h20" stroke="#ddd08c" stroke-width="0.9"/><rect x="312.1" y="138.2" width="30.8" height="18.2" fill="#3f9f42"/><rect x="312.1" y="138.2" width="30.8" height="1.3" fill="#2a8a30"/><rect x="341.2" y="138.2" width="1.7" height="23.5" fill="#1d6424"/><rect x="312.1" y="139.5" width="1" height="16.9" fill="#2f8a34"/><rect x="317.7" y="143" width="5.4" height="10" fill="#1f6a4c"/><path d="M317.7 144.6h5.4M317.7 146.8h5.4M317.7 149h5.4M317.7 151.2h5.4" stroke="#7cc8a4" stroke-width="0.8"/><rect x="325" y="142.6" width="5.4" height="5.2" fill="#148a56"/><circle cx="328" cy="143.8" r="0.9" fill="#d8e8e0"/><rect x="332.7" y="141.8" width="5.9" height="13" fill="#3a3a3a"/><path d="M331.6 143.4h1.1M331.6 145.8h1.1M331.6 148.2h1.1M331.6 150.6h1.1M331.6 153h1.1M338.6 143.4h1.1M338.6 145.8h1.1M338.6 148.2h1.1M338.6 150.6h1.1M338.6 153h1.1" stroke="#8fd08c" stroke-width="0.8"/><ellipse cx="327.2" cy="151.5" rx="3.2" ry="2.9" fill="#e6d400"/><ellipse cx="327.2" cy="152.6" rx="2.8" ry="1.6" fill="#cfae00"/><rect x="313.7" y="156.4" width="16.8" height="4.2" fill="#8a9c22"/><rect x="332.9" y="156.4" width="6.3" height="4.2" fill="#8a9c22"/><path d="M315.4 156.6v3.8M317.4 156.6v3.8M319.4 156.6v3.8M321.4 156.6v3.8M323.4 156.6v3.8M325.4 156.6v3.8M327.4 156.6v3.8M329.2 156.6v3.8M334.6 156.6v3.8M336.6 156.6v3.8" stroke="#6e8418" stroke-width="0.7"/><rect x="313.2" y="160.4" width="26.6" height="0.8" fill="#2c6a20"/></svg>
<div class="a t" style="top:138.0px;line-height:18px;font-size:13px;color:#f0f0f0;letter-spacing:-0.099px;left:353.4px;"><span id="t73">PCB Editor – Interactive Routing</span></div>
<div class="a" style="left:304px;top:182px;width:304px;height:21.5px;background:#505050;"></div>
<div class="a t" style="top:184.6px;line-height:16px;font-size:11px;font-weight:700;color:#f6f6f6;letter-spacing:0.065px;left:310.3px;"><span id="t74">Routing Conflict Resolution</span></div>
<div class="a" style="left:320.4px;top:213.5px;width:21px;height:21px;background:#525252;border:1px solid #2e2e2e;border-radius:4.5px;box-sizing:border-box;"></div>
<svg class="a" style="left:320.4px;top:213.5px;" width="21" height="21" viewBox="0 0 21 21"><path d="M5.6 10.8 L9.9 14.6 L16.3 7.2" fill="none" stroke="#ffffff" stroke-width="1.7" stroke-linecap="round" stroke-linejoin="round"/></svg>
<div class="a t" style="top:216.1px;line-height:16px;font-size:11px;letter-spacing:0.089px;left:345.7px;"><span id="t75"><u>I</u>gnore Obstacles</span></div>
<div class="a" style="left:320.4px;top:237.5px;width:21px;height:21px;background:#525252;border:1px solid #2e2e2e;border-radius:4.5px;box-sizing:border-box;"></div>
<svg class="a" style="left:320.4px;top:237.5px;" width="21" height="21" viewBox="0 0 21 21"><path d="M5.6 10.8 L9.9 14.6 L16.3 7.2" fill="none" stroke="#ffffff" stroke-width="1.7" stroke-linecap="round" stroke-linejoin="round"/></svg>
<div class="a t" style="top:240.1px;line-height:16px;font-size:11px;letter-spacing:-0.075px;left:345.7px;"><span id="t76"><u>P</u>ush Obstacles</span></div>
<div class="a" style="left:320.4px;top:261.5px;width:21px;height:21px;background:#525252;border:1px solid #2e2e2e;border-radius:4.5px;box-sizing:border-box;"></div>
<svg class="a" style="left:320.4px;top:261.5px;" width="21" height="21" viewBox="0 0 21 21"><path d="M5.6 10.8 L9.9 14.6 L16.3 7.2" fill="none" stroke="#ffffff" stroke-width="1.7" stroke-linecap="round" stroke-linejoin="round"/></svg>
<div class="a t" style="top:264.1px;line-height:16px;font-size:11px;letter-spacing:0.087px;left:345.7px;"><span id="t77"><u>W</u>alkaround Obstacles</span></div>
<div class="a" style="left:320.4px;top:285.5px;width:21px;height:21px;background:#525252;border:1px solid #2e2e2e;border-radius:4.5px;box-sizing:border-box;"></div>
<svg class="a" style="left:320.4px;top:285.5px;" width="21" height="21" viewBox="0 0 21 21"><path d="M5.6 10.8 L9.9 14.6 L16.3 7.2" fill="none" stroke="#ffffff" stroke-width="1.7" stroke-linecap="round" stroke-linejoin="round"/></svg>
<div class="a t" style="top:288.1px;line-height:16px;font-size:11px;letter-spacing:0.073px;left:345.7px;"><span id="t78"><u>S</u>top At First Obstacle</span></div>
<div class="a" style="left:320.4px;top:309.5px;width:21px;height:21px;background:#525252;border:1px solid #2e2e2e;border-radius:4.5px;box-sizing:border-box;"></div>
<svg class="a" style="left:320.4px;top:309.5px;" width="21" height="21" viewBox="0 0 21 21"><path d="M5.6 10.8 L9.9 14.6 L16.3 7.2" fill="none" stroke="#ffffff" stroke-width="1.7" stroke-linecap="round" stroke-linejoin="round"/></svg>
<div class="a t" style="top:312.1px;line-height:16px;font-size:11px;letter-spacing:0.104px;left:345.7px;"><span id="t79"><u>H</u>ug And Push Obstacles</span></div>
<div class="a" style="left:320.4px;top:333.5px;width:21px;height:21px;background:#525252;border:1px solid #2e2e2e;border-radius:4.5px;box-sizing:border-box;"></div>
<svg class="a" style="left:320.4px;top:333.5px;" width="21" height="21" viewBox="0 0 21 21"><path d="M5.6 10.8 L9.9 14.6 L16.3 7.2" fill="none" stroke="#ffffff" stroke-width="1.7" stroke-linecap="round" stroke-linejoin="round"/></svg>
<div class="a t" style="top:336.1px;line-height:16px;font-size:11px;letter-spacing:0.176px;left:345.7px;"><span id="t80"><u>A</u>utoRoute On Current Layer</span></div>
<div class="a" style="left:320.4px;top:357.5px;width:21px;height:21px;background:#525252;border:1px solid #2e2e2e;border-radius:4.5px;box-sizing:border-box;"></div>
<svg class="a" style="left:320.4px;top:357.5px;" width="21" height="21" viewBox="0 0 21 21"><path d="M5.6 10.8 L9.9 14.6 L16.3 7.2" fill="none" stroke="#ffffff" stroke-width="1.7" stroke-linecap="round" stroke-linejoin="round"/></svg>
<div class="a t" style="top:360.1px;line-height:16px;font-size:11px;letter-spacing:0.186px;left:345.7px;"><span id="t81">AutoRoute On <u>M</u>ultiple Layers</span></div>
<div class="a t" style="top:384.3px;line-height:16px;font-size:11px;letter-spacing:0.311px;left:320px;"><span id="t82">Current Mode</span></div>
<div class="a" style="left:424px;top:381.7px;width:153.6px;height:20.3px;border:1px solid #2c2c2c;border-radius:4px;box-sizing:border-box;background:linear-gradient(#686868,#555555);"></div>
<svg class="a" style="left:562.0px;top:388.7px;" width="11" height="6" viewBox="0 0 11 6"><path d="M0 0 H11 L5.5 6 Z" fill="#ffffff"/></svg>
<div class="a t" style="top:383.7px;line-height:16px;font-size:11px;color:#f0f0f0;letter-spacing:0.063px;left:430px;"><span id="t83">HugNPush Obstacles</span></div>
<div class="a" style="left:624.3px;top:182px;width:335px;height:21.5px;background:#505050;"></div>
<div class="a t" style="top:184.6px;line-height:16px;font-size:11px;font-weight:700;color:#f6f6f6;letter-spacing:0.252px;left:630.5999999999999px;"><span id="t84">Dragging</span></div>
<div class="a" style="left:640.4px;top:213.4px;width:21px;height:21px;background:#525252;border:1px solid #2e2e2e;border-radius:4.5px;box-sizing:border-box;"></div>
<svg class="a" style="left:640.4px;top:213.4px;" width="21" height="21" viewBox="0 0 21 21"><path d="M5.6 10.8 L9.9 14.6 L16.3 7.2" fill="none" stroke="#ffffff" stroke-width="1.7" stroke-linecap="round" stroke-linejoin="round"/></svg>
<div class="a t" style="top:216.2px;line-height:16px;font-size:11px;letter-spacing:0.175px;left:665.7px;"><span id="t85">Preserve Angle When Dragging</span></div>
<div class="a" style="left:664.85px;top:237.99999999999997px;width:17.8px;height:17.8px;background:#555555;border:1.2px solid #2a2a2a;border-radius:9px;box-sizing:border-box;"></div>
<div class="a t" style="top:238.8px;line-height:16px;font-size:11px;letter-spacing:0.133px;left:686.7px;"><span id="t86"><u>I</u>gnore Obstacles</span></div>
<div class="a" style="left:664.85px;top:262.0px;width:17.8px;height:17.8px;background:#555555;border:1.2px solid #2a2a2a;border-radius:9px;box-sizing:border-box;"></div>
<div class="a" style="left:669.25px;top:266.4px;width:9px;height:9px;background:#ffffff;border-radius:4.5px;"></div>
<div class="a t" style="top:262.8px;line-height:16px;font-size:11px;letter-spacing:0.052px;left:686.7px;"><span id="t87"><u>A</u>void Obstacles (Snap Grid)</span></div>
<div class="a" style="left:664.85px;top:286.0px;width:17.8px;height:17.8px;background:#555555;border:1.2px solid #2a2a2a;border-radius:9px;box-sizing:border-box;"></div>
<div class="a t" style="top:286.8px;line-height:16px;font-size:11px;letter-spacing:0.087px;left:686.7px;"><span id="t88"><u>A</u>void Obstacles</span></div>
<div class="a t" style="top:317.4px;line-height:16px;font-size:11px;letter-spacing:0.291px;left:640px;"><span id="t89">Vertex Action</span></div>
<div class="a" style="left:768.3px;top:315px;width:121.3px;height:20.3px;border:1px solid #2c2c2c;border-radius:4px;box-sizing:border-box;background:linear-gradient(#686868,#555555);"></div>
<svg class="a" style="left:873.9999999999999px;top:322px;" width="11" height="6" viewBox="0 0 11 6"><path d="M0 0 H11 L5.5 6 Z" fill="#ffffff"/></svg>
<div class="a t" style="top:317.0px;line-height:16px;font-size:11px;color:#f0f0f0;letter-spacing:0.273px;left:774.3px;"><span id="t90">Deform</span></div>
<div class="a t" style="top:349.4px;line-height:16px;font-size:11px;letter-spacing:0.198px;left:640px;"><span id="t91">Unselected via/track</span></div>
<div class="a" style="left:768.3px;top:347px;width:121.3px;height:20.3px;border:1px solid #2c2c2c;border-radius:4px;box-sizing:border-box;background:linear-gradient(#686868,#555555);"></div>
<svg class="a" style="left:873.9999999999999px;top:354px;" width="11" height="6" viewBox="0 0 11 6"><path d="M0 0 H11 L5.5 6 Z" fill="#ffffff"/></svg>
<div class="a t" style="top:349.0px;line-height:16px;font-size:11px;color:#f0f0f0;letter-spacing:0.139px;left:774.3px;"><span id="t92">Drag</span></div>
<div class="a t" style="top:381.4px;line-height:16px;font-size:11px;letter-spacing:0.137px;left:640px;"><span id="t93">Selected via/track</span></div>
<div class="a" style="left:768.3px;top:379px;width:121.3px;height:20.3px;border:1px solid #2c2c2c;border-radius:4px;box-sizing:border-box;background:linear-gradient(#686868,#555555);"></div>
<svg class="a" style="left:873.9999999999999px;top:386px;" width="11" height="6" viewBox="0 0 11 6"><path d="M0 0 H11 L5.5 6 Z" fill="#ffffff"/></svg>
<div class="a t" style="top:381.0px;line-height:16px;font-size:11px;color:#f0f0f0;letter-spacing:0.139px;left:774.3px;"><span id="t94">Drag</span></div>
<div class="a t" style="top:413.1px;line-height:16px;font-size:11px;letter-spacing:0.367px;left:640px;"><span id="t95">Component pushing</span></div>
<div class="a" style="left:768.3px;top:410.7px;width:121.3px;height:20.3px;border:1px solid #2c2c2c;border-radius:4px;box-sizing:border-box;background:linear-gradient(#686868,#555555);"></div>
<svg class="a" style="left:873.9999999999999px;top:417.7px;" width="11" height="6" viewBox="0 0 11 6"><path d="M0 0 H11 L5.5 6 Z" fill="#ffffff"/></svg>
<div class="a t" style="top:412.7px;line-height:16px;font-size:11px;color:#f0f0f0;letter-spacing:0.299px;left:774.3px;"><span id="t96">Ignore</span></div>
<div class="a" style="left:640.4px;top:447.6px;width:21px;height:21px;background:#525252;border:1px solid #2e2e2e;border-radius:4.5px;box-sizing:border-box;"></div>
<div class="a t" style="top:450.2px;line-height:16px;font-size:11px;letter-spacing:0.397px;left:665.7px;"><span id="t97">Component re-route</span></div>
<div class="a" style="left:640.4px;top:470.9px;width:21px;height:21px;background:#525252;border:1px solid #2e2e2e;border-radius:4.5px;box-sizing:border-box;"></div>
<svg class="a" style="left:640.4px;top:470.9px;" width="21" height="21" viewBox="0 0 21 21"><path d="M5.6 10.8 L9.9 14.6 L16.3 7.2" fill="none" stroke="#ffffff" stroke-width="1.7" stroke-linecap="round" stroke-linejoin="round"/></svg>
<div class="a t" style="top:473.5px;line-height:16px;font-size:11px;letter-spacing:0.364px;left:665.7px;"><span id="t98">Move component with relevant routing</span></div>
<div class="a" style="left:304px;top:499.5px;width:304px;height:21.5px;background:#505050;"></div>
<div class="a t" style="top:502.1px;line-height:16px;font-size:11px;font-weight:700;color:#f6f6f6;letter-spacing:0.128px;left:310.3px;"><span id="t99">Interactive Routing Options</span></div>
<div class="a" style="left:320.4px;top:532.8px;width:21px;height:21px;background:#525252;border:1px solid #2e2e2e;border-radius:4.5px;box-sizing:border-box;"></div>
<svg class="a" style="left:320.4px;top:532.8px;" width="21" height="21" viewBox="0 0 21 21"><path d="M5.6 10.8 L9.9 14.6 L16.3 7.2" fill="none" stroke="#ffffff" stroke-width="1.7" stroke-linecap="round" stroke-linejoin="round"/></svg>
<div class="a t" style="top:534.9px;line-height:16px;font-size:11px;letter-spacing:0.240px;left:345.7px;"><span id="t100">Automatically Terminate Routing</span></div>
<div class="a" style="left:320.4px;top:556.8px;width:21px;height:21px;background:#525252;border:1px solid #2e2e2e;border-radius:4.5px;box-sizing:border-box;"></div>
<svg class="a" style="left:320.4px;top:556.8px;" width="21" height="21" viewBox="0 0 21 21"><path d="M5.6 10.8 L9.9 14.6 L16.3 7.2" fill="none" stroke="#ffffff" stroke-width="1.7" stroke-linecap="round" stroke-linejoin="round"/></svg>
<div class="a t" style="top:558.9px;line-height:16px;font-size:11px;letter-spacing:0.136px;left:345.7px;"><span id="t101">Automatically Remove Loops</span></div>
<div class="a" style="left:336.6px;top:578.8px;width:21px;height:21px;background:#525252;border:1px solid #2e2e2e;border-radius:4.5px;box-sizing:border-box;"></div>
<svg class="a" style="left:336.6px;top:578.8px;" width="21" height="21" viewBox="0 0 21 21"><path d="M5.6 10.8 L9.9 14.6 L16.3 7.2" fill="none" stroke="#ffffff" stroke-width="1.7" stroke-linecap="round" stroke-linejoin="round"/></svg>
<div class="a t" style="top:580.9px;line-height:16px;font-size:11px;letter-spacing:0.170px;left:361.7px;"><span id="t102">Remove Net Antennas</span></div>
<div class="a" style="left:320.4px;top:600.8px;width:21px;height:21px;background:#525252;border:1px solid #2e2e2e;border-radius:4.5px;box-sizing:border-box;"></div>
<svg class="a" style="left:320.4px;top:600.8px;" width="21" height="21" viewBox="0 0 21 21"><path d="M5.6 10.8 L9.9 14.6 L16.3 7.2" fill="none" stroke="#ffffff" stroke-width="1.7" stroke-linecap="round" stroke-linejoin="round"/></svg>
<div class="a t" style="top:602.9px;line-height:16px;font-size:11px;letter-spacing:0.102px;left:345.7px;"><span id="t103"><u>A</u>llow Via Pushing</span></div>
<div class="a" style="left:320.4px;top:622.8px;width:21px;height:21px;background:#525252;border:1px solid #2e2e2e;border-radius:4.5px;box-sizing:border-box;"></div>
<div class="a t" style="top:624.9px;line-height:16px;font-size:11px;letter-spacing:0.023px;left:345.7px;"><span id="t104">Display Clearance Boundaries</span></div>
<div class="a" style="left:336.6px;top:644.8px;width:21px;height:21px;background:#454545;border:1px solid #3b3b3b;border-radius:4px;box-sizing:border-box;"></div>
<div class="a t" style="top:646.9px;line-height:16px;font-size:11px;color:#8a8a8a;letter-spacing:-0.011px;left:361.7px;"><span id="t105">Reduce Clearance Display Area</span></div>
<div class="a" style="left:624.3px;top:499.5px;width:335px;height:21.5px;background:#505050;"></div>
<div class="a t" style="top:502.1px;line-height:16px;font-size:11px;font-weight:700;color:#f6f6f6;letter-spacing:0.091px;left:630.5999999999999px;"><span id="t106">Interactive Routing Width Sources</span></div>
<div class="a" style="left:640.4px;top:531.6px;width:21px;height:21px;background:#525252;border:1px solid #2e2e2e;border-radius:4.5px;box-sizing:border-box;"></div>
<svg class="a" style="left:640.4px;top:531.6px;" width="21" height="21" viewBox="0 0 21 21"><path d="M5.6 10.8 L9.9 14.6 L16.3 7.2" fill="none" stroke="#ffffff" stroke-width="1.7" stroke-linecap="round" stroke-linejoin="round"/></svg>
<div class="a t" style="top:534.2px;line-height:16px;font-size:11px;letter-spacing:0.083px;left:665.7px;"><span id="t107">Pickup Track Width From Existing Routes</span></div>
<div class="a t" style="top:559.0px;line-height:16px;font-size:11px;letter-spacing:0.241px;left:640px;"><span id="t108">Track Width Mode</span></div>
<div class="a" style="left:744px;top:555.6px;width:145.6px;height:20.3px;border:1px solid #2c2c2c;border-radius:4px;box-sizing:border-box;background:linear-gradient(#686868,#555555);"></div>
<svg class="a" style="left:874.0px;top:562.6px;" width="11" height="6" viewBox="0 0 11 6"><path d="M0 0 H11 L5.5 6 Z" fill="#ffffff"/></svg>
<div class="a t" style="top:557.6px;line-height:16px;font-size:11px;color:#f0f0f0;letter-spacing:0.032px;left:750px;"><span id="t109">Rule Preferred</span></div>
<div class="a t" style="top:591.2px;line-height:16px;font-size:11px;letter-spacing:0.097px;left:640px;"><span id="t110">Via Size Mode</span></div>
<div class="a" style="left:744px;top:587.6px;width:145.6px;height:20.3px;border:1px solid #2c2c2c;border-radius:4px;box-sizing:border-box;background:linear-gradient(#686868,#555555);"></div>
<svg class="a" style="left:874.0px;top:594.6px;" width="11" height="6" viewBox="0 0 11 6"><path d="M0 0 H11 L5.5 6 Z" fill="#c4c4c4"/></svg>
<div class="a t" style="top:589.6px;line-height:16px;font-size:11px;color:#f0f0f0;letter-spacing:0.032px;left:750px;"><span id="t111">Rule Preferred</span></div>
<div class="a" style="left:304px;top:695px;width:304px;height:21.5px;background:#505050;"></div>
<div class="a t" style="top:697.5px;line-height:16px;font-size:11px;font-weight:700;color:#f6f6f6;letter-spacing:-0.081px;left:310.3px;"><span id="t112">General</span></div>
<div class="a t" style="top:730.8px;line-height:16px;font-size:11px;letter-spacing:0.108px;left:320.3px;"><span id="t113">Routing Gloss Effort</span></div>
<div class="a" style="left:444.3px;top:727px;width:133.3px;height:20.3px;border:1px solid #2c2c2c;border-radius:4px;box-sizing:border-box;background:linear-gradient(#686868,#555555);"></div>
<svg class="a" style="left:562.0px;top:734px;" width="11" height="6" viewBox="0 0 11 6"><path d="M0 0 H11 L5.5 6 Z" fill="#ffffff"/></svg>
<div class="a t" style="top:729.0px;line-height:16px;font-size:11px;color:#f0f0f0;letter-spacing:0.095px;left:450.3px;"><span id="t114">Weak</span></div>
<div class="a t" style="top:762.6px;line-height:16px;font-size:11px;letter-spacing:0.146px;left:320.3px;"><span id="t115">Hugging Style</span></div>
<div class="a" style="left:444.3px;top:759px;width:133.3px;height:20.3px;border:1px solid #2c2c2c;border-radius:4px;box-sizing:border-box;background:linear-gradient(#686868,#555555);"></div>
<svg class="a" style="left:562.0px;top:766px;" width="11" height="6" viewBox="0 0 11 6"><path d="M0 0 H11 L5.5 6 Z" fill="#ffffff"/></svg>
<div class="a t" style="top:761.0px;line-height:16px;font-size:11px;color:#f0f0f0;letter-spacing:0.235px;left:450.3px;"><span id="t116">Rounded</span></div>
<div class="a t" style="top:794.6px;line-height:16px;font-size:11px;letter-spacing:0.335px;left:320.3px;"><span id="t117">Minimum Arc Ratio</span></div>
<div class="a" style="left:444.3px;top:791px;width:133.3px;height:20.3px;background:#2d2d2d;border:1px solid #353535;border-radius:4px;box-sizing:border-box;"></div>
<svg class="a" style="left:561.4px;top:791px;" width="11" height="20" viewBox="0 0 11 20"><path d="M0.6 7.6 L5.3 3 L10 7.6 M0.6 11.6 L5.3 16.4 L10 11.6" fill="none" stroke="#d8d8d8" stroke-width="1.15"/></svg>
<div class="a t" style="top:793.0px;line-height:16px;font-size:11px;color:#f0f0f0;letter-spacing:-0.106px;left:450.3px;"><span id="t118">0.000</span></div>
<div class="a t" style="top:826.6px;line-height:16px;font-size:11px;letter-spacing:0.256px;left:320.3px;"><span id="t119">Miter Ratio</span></div>
<div class="a" style="left:444.3px;top:823px;width:133.3px;height:20.3px;background:#2d2d2d;border:1px solid #353535;border-radius:4px;box-sizing:border-box;"></div>
<svg class="a" style="left:561.4px;top:823px;" width="11" height="20" viewBox="0 0 11 20"><path d="M0.6 7.6 L5.3 3 L10 7.6 M0.6 11.6 L5.3 16.4 L10 11.6" fill="none" stroke="#d8d8d8" stroke-width="1.15"/></svg>
<div class="a t" style="top:825.0px;line-height:16px;font-size:11px;color:#f0f0f0;letter-spacing:-0.106px;left:450.3px;"><span id="t120">1.000</span></div>
<div class="a t" style="top:858.6px;line-height:16px;font-size:11px;letter-spacing:0.043px;left:320.3px;"><span id="t121">Pad Entry Stability</span></div>
<div class="a" style="left:444.3px;top:855px;width:133.3px;height:20.3px;background:#2d2d2d;border:1px solid #353535;border-radius:4px;box-sizing:border-box;"></div>
<svg class="a" style="left:561.4px;top:855px;" width="11" height="20" viewBox="0 0 11 20"><path d="M0.6 7.6 L5.3 3 L10 7.6 M0.6 11.6 L5.3 16.4 L10 11.6" fill="none" stroke="#d8d8d8" stroke-width="1.15"/></svg>
<div class="a t" style="top:857.0px;line-height:16px;font-size:11px;color:#f0f0f0;letter-spacing:-0.525px;left:450.3px;"><span id="t122">5</span></div>
<svg class="a" style="left:310px;top:750px" width="280" height="40" viewBox="310 750 280 40"><rect x="318.2" y="758.4" width="260.6" height="23.8" fill="none" stroke="#ff0000" stroke-width="4.6"/></svg>
<div class="a" style="left:624.3px;top:695px;width:335px;height:21.5px;background:#505050;"></div>
<div class="a t" style="top:697.5px;line-height:16px;font-size:11px;font-weight:700;color:#f6f6f6;letter-spacing:-0.258px;left:630.5999999999999px;"><span id="t123">Favorites</span></div>
<div class="a" style="left:640px;top:727px;width:249px;height:25.6px;background:#4b4b4b;border:1px solid #2c2c2c;border-radius:4px;box-sizing:border-box;"></div>
<div class="a t" style="top:732.0px;line-height:16px;font-size:11px;color:#f0f0f0;letter-spacing:0.183px;left:675.7px;"><span id="t124"><u>F</u>avorite Interactive Routing Widths</span></div>
<div class="a" style="left:70px;top:947px;width:113.6px;height:24.6px;background:#505050;border:1px solid #2c2c2c;border-radius:4px;box-sizing:border-box;"></div>
<div class="a" style="left:169px;top:951px;width:1px;height:16.6px;background:#2c2c2c;"></div>
<svg class="a" style="left:171.3px;top:956.6999999999999px;" width="11" height="6" viewBox="0 0 11 6"><path d="M0 0 H11 L5.5 6 Z" fill="#ffffff"/></svg>
<div class="a t" style="top:951.1px;line-height:16px;font-size:11px;color:#f0f0f0;letter-spacing:0.053px;left:-181.2px;width:600px;text-align:center;"><span id="t125">Set To Defaults</span></div>
<div class="a" style="left:190px;top:947px;width:74px;height:24.6px;background:#505050;border:1px solid #2c2c2c;border-radius:4px;box-sizing:border-box;"></div>
<div class="a" style="left:249px;top:951px;width:1px;height:16.6px;background:#2c2c2c;"></div>
<svg class="a" style="left:251.5px;top:956.6999999999999px;" width="11" height="6" viewBox="0 0 11 6"><path d="M0 0 H11 L5.5 6 Z" fill="#ffffff"/></svg>
<div class="a t" style="top:951.1px;line-height:16px;font-size:11px;color:#f0f0f0;letter-spacing:-0.393px;left:-81.4px;width:600px;text-align:center;"><span id="t126">Save...</span></div>
<div class="a" style="left:270.6px;top:947px;width:74.8px;height:24.6px;background:#505050;border:1px solid #2c2c2c;border-radius:4px;box-sizing:border-box;"></div>
<div class="a" style="left:330.3px;top:951px;width:1px;height:16.6px;background:#2c2c2c;"></div>
<svg class="a" style="left:332.85px;top:956.6999999999999px;" width="11" height="6" viewBox="0 0 11 6"><path d="M0 0 H11 L5.5 6 Z" fill="#ffffff"/></svg>
<div class="a t" style="top:951.1px;line-height:16px;font-size:11px;color:#f0f0f0;letter-spacing:-0.120px;left:-0.19999999999998863px;width:600px;text-align:center;"><span id="t127">Load...</span></div>
<div class="a" style="left:352px;top:947px;width:112px;height:24.6px;background:#505050;border:1px solid #2c2c2c;border-radius:4px;box-sizing:border-box;"></div>
<div class="a" style="left:449px;top:951px;width:1px;height:16.6px;background:#2c2c2c;"></div>
<svg class="a" style="left:451.5px;top:956.6999999999999px;" width="11" height="6" viewBox="0 0 11 6"><path d="M0 0 H11 L5.5 6 Z" fill="#ffffff"/></svg>
<div class="a t" style="top:951.1px;line-height:16px;font-size:11px;color:#f0f0f0;letter-spacing:0.188px;left:99.60000000000002px;width:600px;text-align:center;"><span id="t128">Import From...</span></div>
<div class="a" style="left:739.4px;top:946.4px;width:75.6px;height:25.6px;background:#505050;border:1px solid #86b2e6;border-radius:4px;box-sizing:border-box;"></div>
<div class="a t" style="top:951.0px;line-height:16px;font-size:11px;color:#f0f0f0;letter-spacing:-0.453px;left:477.19999999999993px;width:600px;text-align:center;"><span id="t129">OK</span></div>
<div class="a" style="left:820.7px;top:946.4px;width:75px;height:25.6px;background:#505050;border:1px solid #2c2c2c;border-radius:4px;box-sizing:border-box;"></div>
<div class="a t" style="top:951.0px;line-height:16px;font-size:11px;color:#f0f0f0;letter-spacing:-0.042px;left:558.2px;width:600px;text-align:center;"><span id="t130">Cancel</span></div>
<div class="a" style="left:901px;top:946.4px;width:74.7px;height:25.6px;background:#505050;border:1px solid #474747;border-radius:4px;box-sizing:border-box;"></div>
<div class="a t" style="top:951.0px;line-height:16px;font-size:11px;color:#7a7a7a;letter-spacing:0.214px;left:638.35px;width:600px;text-align:center;"><span id="t131">Apply</span></div>
<svg class="a" style="left:580px;top:600px" width="450" height="170" viewBox="580 600 450 170"><path d="M593.5 757.5 L1003 621" stroke="#2ed133" stroke-width="1.8" fill="none"/><path d="M1015 617 L999.2 613.6 L1004.6 628.6 Z" fill="#2ecc2e"/></svg>
</body></html>
